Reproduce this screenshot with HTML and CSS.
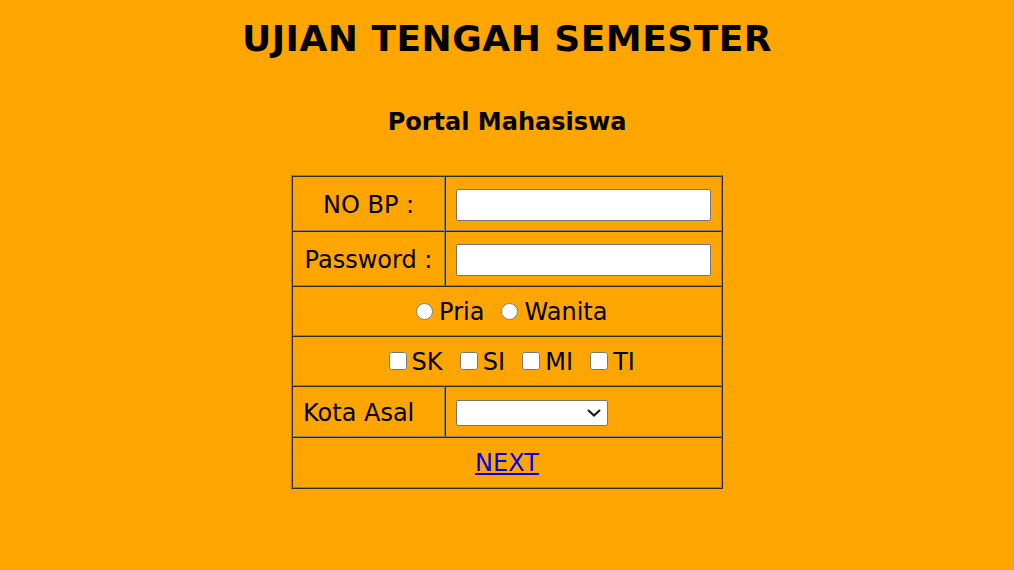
FILE: index.html
```html
<!DOCTYPE html>
<html lang="id">
<head>
<meta charset="utf-8">
<title>Ujian Tengah Semester</title>
<link rel="stylesheet" href="styles.css">
</head>
<body>
<div class="page">
  <h1 class="title">UJIAN TENGAH SEMESTER</h1>
  <h2 class="subtitle">Portal Mahasiswa</h2>
  <table class="form-table">
    <tr>
      <td class="label center">NO BP :</td>
      <td class="field"><input class="text-input" type="text"></td>
    </tr>
    <tr>
      <td class="label center">Password :</td>
      <td class="field"><input class="text-input" type="password"></td>
    </tr>
    <tr>
      <td class="wide" colspan="2"><label class="opt"><input class="radio" type="radio" name="jk">Pria</label> <label class="opt"><input class="radio" type="radio" name="jk">Wanita</label></td>
    </tr>
    <tr>
      <td class="wide" colspan="2"><label class="opt"><input class="check" type="checkbox">SK</label> <label class="opt"><input class="check" type="checkbox">SI</label> <label class="opt"><input class="check" type="checkbox">MI</label> <label class="opt"><input class="check" type="checkbox">TI</label></td>
    </tr>
    <tr>
      <td class="label tall">Kota Asal</td>
      <td class="field select-cell">
        <span class="select-wrap">
          <select class="select"><option></option></select>
          <svg class="chevron" width="14" height="8" viewBox="0 0 14 8"><path d="M1 1 L7 6.5 L13 1" fill="none" stroke="#1a1a1a" stroke-width="2.2"/></svg>
        </span>
      </td>
    </tr>
    <tr>
      <td class="wide next-cell" colspan="2"><a class="next" href="#">NEXT</a></td>
    </tr>
  </table>
</div>
</body>
</html>
```
FILE: styles.css
```css
html, body {
  margin: 0;
  padding: 0;
  background: #ffa500;
}
body {
  font-family: "DejaVu Sans", Verdana, sans-serif;
  color: #000;
}
.page {
  display: flex;
  flex-direction: column;
  align-items: center;
  padding-top: 18px;
}
.title {
  margin: 0;
  font-size: 36px;
  line-height: 42px;
  font-weight: bold;
  letter-spacing: 0.5px;
}
.subtitle {
  margin: 48px 0 0;
  font-size: 24px;
  line-height: 28px;
  font-weight: bold;
}
.form-table {
  margin-top: 39px;
  border: 1px outset gray;
  border-spacing: 0;
  font-size: 24px;
  line-height: 28px;
}
.form-table td {
  border: 1px inset gray;
  padding: 10px;
  vertical-align: middle;
}
.form-table td.label.center {
  padding-top: 11px;
  padding-bottom: 9px;
}
.form-table td.field {
  padding-top: 10px;
  padding-bottom: 9px;
}
.form-table td.wide {
  padding-top: 11px;
  padding-bottom: 9px;
}
.form-table td.label.tall {
  padding-top: 12px;
  padding-bottom: 9px;
}
.form-table td.next-cell {
  padding-top: 11px;
  padding-bottom: 10px;
}
.label {
  width: 131px;
  text-align: left;
  white-space: nowrap;
}
.label.center {
  text-align: center;
}
.field {
  width: 255px;
}
.wide {
  text-align: center;
  white-space: nowrap;
}
.text-input {
  display: block;
  box-sizing: border-box;
  width: 255px;
  height: 32px;
  margin: 2px 0 0;
  border: 1px solid #767676;
  border-radius: 2px;
  background: #fff;
  padding: 0 3px;
}
.opt {
  display: inline;
}
.radio {
  width: 17px;
  height: 17px;
  margin: 0 6.5px 0 9px;
  vertical-align: baseline;
}
.check {
  width: 18px;
  height: 18px;
  margin: 0 5px 0 9.5px;
  vertical-align: baseline;
}
.form-table td.select-cell {
  padding-top: 13px;
  padding-bottom: 10px;
  vertical-align: top;
}
.select-wrap {
  position: relative;
  display: block;
  width: 152px;
  height: 26px;
}
.select {
  appearance: none;
  -webkit-appearance: none;
  display: block;
  box-sizing: border-box;
  width: 152px;
  height: 26px;
  margin: 0;
  border: 1px solid #767676;
  border-radius: 2px;
  background: #fff;
  font-size: 16px;
}
.chevron {
  position: absolute;
  right: 7px;
  top: 9px;
}
.next {
  color: #0000ee;
  text-decoration: underline;
}
```
